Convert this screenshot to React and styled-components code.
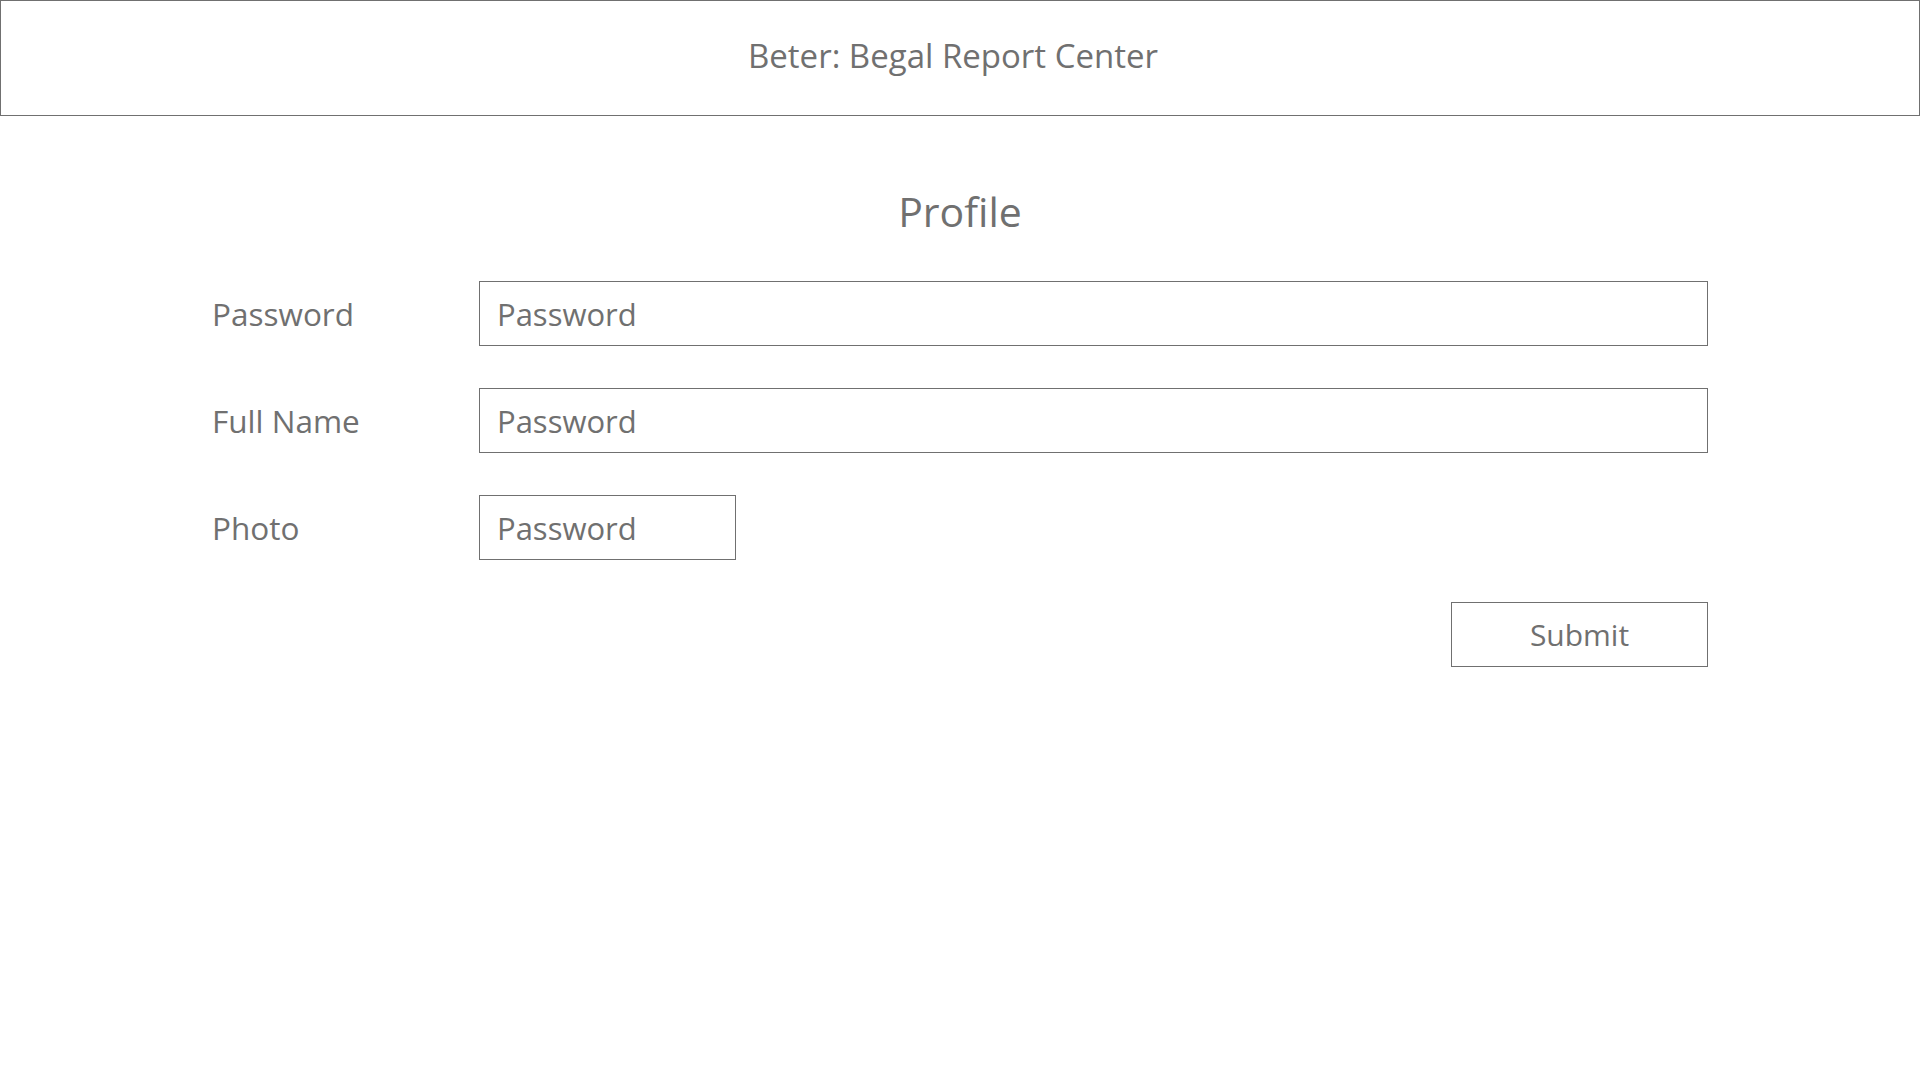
import styled, { createGlobalStyle } from "styled-components";

const GlobalStyle = createGlobalStyle`
  html, body {
    margin: 0;
    padding: 0;
    background: #ffffff;
  }
  body {
    font-family: "Open Sans", "Noto Sans", sans-serif;
    color: #707070;
  }
  * {
    box-sizing: border-box;
  }
`;

const Header = styled.header`
  display: flex;
  justify-content: center;
  align-items: center;
  height: 116px;
  padding: 0 14px 5px 0;
  border: 1px solid #707070;
  font-size: 33px;
  color: #707070;
`;

const Main = styled.main`
  width: 1496px;
  margin: 0 auto;
  padding-top: 67px;
`;

const Title = styled.h1`
  margin: 0 0 42px;
  height: 56px;
  line-height: 56px;
  font-size: 41px;
  font-weight: 400;
  text-align: center;
  color: #707070;
`;

const Form = styled.form`
  display: grid;
  grid-template-columns: 267px 1fr;
  row-gap: 42px;
  align-items: center;
`;

const Label = styled.label`
  font-size: 31.5px;
  color: #707070;
`;

const Input = styled.input`
  width: ${props => props.$width || "100%"};
  height: 65px;
  padding: 0 17px;
  border: 1px solid #707070;
  border-radius: 0;
  outline: none;
  font-family: "Open Sans", "Noto Sans", sans-serif;
  font-size: 31px;
  color: #707070;
  background: #ffffff;

  &::placeholder {
    color: #707070;
    opacity: 1;
  }
`;

const Actions = styled.div`
  grid-column: 1 / 3;
  display: flex;
  justify-content: flex-end;
`;

const SubmitButton = styled.button`
  width: 257px;
  height: 65px;
  border: 1px solid #707070;
  border-radius: 0;
  background: #ffffff;
  font-family: "Open Sans", "Noto Sans", sans-serif;
  font-size: 30px;
  color: #707070;
  cursor: pointer;
`;

const App = () => {
  const handleSubmit = e => {
    e.preventDefault();
  };

  return (
    <>
      <GlobalStyle />
      <Header>Beter: Begal Report Center</Header>
      <Main>
        <Title>Profile</Title>
        <Form onSubmit={handleSubmit}>
          <Label htmlFor="password">Password</Label>
          <Input id="password" type="password" placeholder="Password" />
          <Label htmlFor="fullname">Full Name</Label>
          <Input id="fullname" type="text" placeholder="Password" />
          <Label htmlFor="photo">Photo</Label>
          <Input id="photo" type="text" placeholder="Password" $width="257px" />
          <Actions>
            <SubmitButton type="submit">Submit</SubmitButton>
          </Actions>
        </Form>
      </Main>
    </>
  );
};

export default App;
